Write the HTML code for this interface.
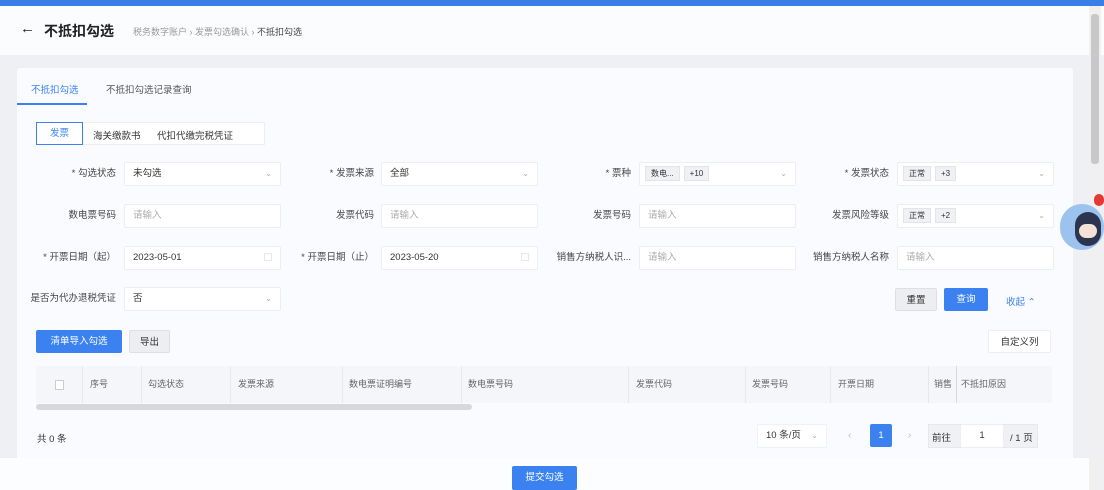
<!DOCTYPE html>
<html><head><meta charset="utf-8"><style>
*{box-sizing:border-box;margin:0;padding:0}
body{width:1104px;height:490px;overflow:hidden;background:#eef0f3;font-family:"Liberation Sans","Noto Sans CJK SC",sans-serif;font-size:10px;color:#333;position:relative}
.a{position:absolute}
.top{left:0;top:0;width:1104px;height:6px;background:#3a7ee8}
.hdr{left:0;top:6px;width:1104px;height:49px;background:#fbfcfe}
.card{left:17px;top:68px;width:1056px;height:392px;background:#fafbfe;border-radius:3px}
.lbl{text-align:right;width:110px;font-size:9.5px;color:#444;line-height:24px;height:24px}
.inp{height:24px;width:157px;background:#fff;border:1px solid #eceef2;border-radius:2px;font-size:9.5px;line-height:22px;padding-left:8px;color:#333}
.ph{color:#aaa}
.arr{position:absolute;right:8px;top:0;color:#aaa;font-size:8px}
.tag{display:inline-block;background:#f0f1f4;border:1px solid #e2e4e8;height:15px;line-height:13px;padding:0 5px;font-size:8px;margin-right:4px;vertical-align:middle}
.btn{height:23px;line-height:23px;text-align:center;font-size:9.5px;border-radius:2px}
.blue{background:#3b82f0;color:#fff}
.gray{background:#eceef1;border:1px solid #dcdfe4;color:#333}
th{font-weight:normal}
</style></head><body>
<div class="a top"></div>
<div class="a hdr">
 <div class="a" style="left:20px;top:14px;font-size:15px;color:#222">←</div>
 <div class="a" style="left:44px;top:15px;font-size:14px;font-weight:bold;color:#222">不抵扣勾选</div>
 <div class="a" style="left:133px;top:19px;font-size:9px;color:#999">税务数字账户 › 发票勾选确认 › <span style="color:#444">不抵扣勾选</span></div>
</div>
<div class="a card"></div>
<div class="a" style="left:31px;top:82px;font-size:9.5px;color:#3b82f0">不抵扣勾选</div>
<div class="a" style="left:106px;top:82px;font-size:9.5px;color:#555">不抵扣勾选记录查询</div>
<div class="a" style="left:17px;top:103px;width:70px;height:2px;background:#3b82f0"></div>
<div class="a" style="left:36px;top:122px;width:229px;height:23px;border:1px solid #eceef2;background:#fff"></div>
<div class="a" style="left:36px;top:122px;width:47px;height:23px;border:1px solid #3b82f0;color:#3b82f0;text-align:center;line-height:21px;font-size:9.5px;background:#fff">发票</div>
<div class="a" style="left:93px;top:128px;font-size:9.5px">海关缴款书</div>
<div class="a" style="left:157px;top:128px;font-size:9.5px">代扣代缴完税凭证</div>

<!-- row1 -->
<div class="a lbl" style="left:6px;top:162px">* 勾选状态</div>
<div class="a inp" style="left:124px;top:162px">未勾选<span class="arr">⌄</span></div>
<div class="a lbl" style="left:264px;top:162px">* 发票来源</div>
<div class="a inp" style="left:381px;top:162px">全部<span class="arr">⌄</span></div>
<div class="a lbl" style="left:521px;top:162px">* 票种</div>
<div class="a inp" style="left:639px;top:162px;padding-left:5px"><span class="tag">数电...</span><span class="tag">+10</span><span class="arr">⌄</span></div>
<div class="a lbl" style="left:779px;top:162px">* 发票状态</div>
<div class="a inp" style="left:897px;top:162px;padding-left:5px"><span class="tag">正常</span><span class="tag">+3</span><span class="arr">⌄</span></div>
<!-- row2 -->
<div class="a lbl" style="left:6px;top:204px">数电票号码</div>
<div class="a inp ph" style="left:124px;top:204px">请输入</div>
<div class="a lbl" style="left:264px;top:204px">发票代码</div>
<div class="a inp ph" style="left:381px;top:204px">请输入</div>
<div class="a lbl" style="left:521px;top:204px">发票号码</div>
<div class="a inp ph" style="left:639px;top:204px">请输入</div>
<div class="a lbl" style="left:779px;top:204px">发票风险等级</div>
<div class="a inp" style="left:897px;top:204px;padding-left:5px"><span class="tag">正常</span><span class="tag">+2</span><span class="arr">⌄</span></div>
<!-- row3 -->
<div class="a lbl" style="left:6px;top:246px">* 开票日期（起）</div>
<div class="a inp" style="left:124px;top:246px">2023-05-01<span class="arr">▢</span></div>
<div class="a lbl" style="left:264px;top:246px">* 开票日期（止）</div>
<div class="a inp" style="left:381px;top:246px">2023-05-20<span class="arr">▢</span></div>
<div class="a lbl" style="left:521px;top:246px">销售方纳税人识...</div>
<div class="a inp ph" style="left:639px;top:246px">请输入</div>
<div class="a lbl" style="left:779px;top:246px">销售方纳税人名称</div>
<div class="a inp ph" style="left:897px;top:246px">请输入</div>
<!-- row4 -->
<div class="a lbl" style="left:6px;top:287px">是否为代办退税凭证</div>
<div class="a inp" style="left:124px;top:287px">否<span class="arr">⌄</span></div>
<div class="a btn gray" style="left:895px;top:288px;width:42px">重置</div>
<div class="a btn blue" style="left:944px;top:288px;width:44px">查询</div>
<div class="a" style="left:1006px;top:294px;font-size:9.5px;color:#3b82f0">收起 ⌃</div>

<div class="a btn blue" style="left:36px;top:330px;width:86px">清单导入勾选</div>
<div class="a btn gray" style="left:129px;top:330px;width:41px">导出</div>
<div class="a btn" style="left:988px;top:330px;width:63px;background:#fff;border:1px solid #eceef2">自定义列</div>

<div class="a" style="left:36px;top:366px;width:1016px;height:37px;background:#f4f6f9"></div>
<div class="a" style="left:36px;top:366px;width:1016px;height:37px;font-size:9px;color:#666;line-height:37px">
 <span class="a" style="left:19px;top:14px;width:9px;height:10px;border:1px solid #ccc;background:#fff"></span>
 <span class="a" style="left:54px">序号</span>
 <span class="a" style="left:112px">勾选状态</span>
 <span class="a" style="left:202px">发票来源</span>
 <span class="a" style="left:313px">数电票证明编号</span>
 <span class="a" style="left:432px">数电票号码</span>
 <span class="a" style="left:600px">发票代码</span>
 <span class="a" style="left:716px">发票号码</span>
 <span class="a" style="left:802px">开票日期</span>
 <span class="a" style="left:898px">销售</span>
 <span class="a" style="left:925px">不抵扣原因</span>
 <span class="a" style="left:46px;top:0;width:1px;height:37px;background:#e6e8ec"></span>
 <span class="a" style="left:105px;top:0;width:1px;height:37px;background:#e6e8ec"></span>
 <span class="a" style="left:194px;top:0;width:1px;height:37px;background:#e6e8ec"></span>
 <span class="a" style="left:306px;top:0;width:1px;height:37px;background:#e6e8ec"></span>
 <span class="a" style="left:425px;top:0;width:1px;height:37px;background:#e6e8ec"></span>
 <span class="a" style="left:592px;top:0;width:1px;height:37px;background:#e6e8ec"></span>
 <span class="a" style="left:709px;top:0;width:1px;height:37px;background:#e6e8ec"></span>
 <span class="a" style="left:794px;top:0;width:1px;height:37px;background:#e6e8ec"></span>
 <span class="a" style="left:892px;top:0;width:1px;height:37px;background:#e6e8ec"></span>
 <span class="a" style="left:920px;top:0;width:1px;height:37px;background:#d8dbe0"></span>
</div>
<div class="a" style="left:36px;top:404px;width:436px;height:6px;background:#d6d8dc;border-radius:3px"></div>

<div class="a" style="left:37px;top:431px;font-size:9.5px">共 0 条</div>
<div class="a inp" style="left:757px;top:424px;width:70px;border-color:#f0f1f4">10 条/页<span class="arr">⌄</span></div>
<div class="a" style="left:848px;top:430px;color:#bbb">‹</div>
<div class="a btn blue" style="left:870px;top:424px;width:22px">1</div>
<div class="a" style="left:908px;top:430px;color:#bbb">›</div>
<div class="a" style="left:928px;top:424px;width:110px;height:24px;background:#f0f1f4;border:1px solid #e6e8ec"></div>
<div class="a" style="left:932px;top:430px;font-size:9.5px">前往</div>
<div class="a inp" style="left:960px;top:424px;width:44px;text-align:center;padding:0">1</div>
<div class="a" style="left:1010px;top:430px;font-size:9.5px">/ 1 页</div>

<div class="a" style="left:0;top:458px;width:1090px;height:32px;background:#fcfdff"></div>
<div class="a btn blue" style="left:512px;top:466px;width:65px;height:24px">提交勾选</div>

<div class="a" style="left:1089px;top:6px;width:12px;height:484px;background:#f0f0f0"></div>
<div class="a" style="left:1091px;top:14px;width:8px;height:150px;background:#c8c8c8;border-radius:3px"></div>
<div class="a" style="left:1060px;top:204px;width:44px;height:46px;border-radius:22px;background:#9cc3ee"></div>
<div class="a" style="left:1075px;top:212px;width:26px;height:34px;border-radius:13px;background:#2c3550"></div>
<div class="a" style="left:1079px;top:224px;width:18px;height:14px;border-radius:7px;background:#f4e2d6"></div>
<div class="a" style="left:1094px;top:194px;width:10px;height:12px;border-radius:5px;background:#e53935"></div>
</body></html>
